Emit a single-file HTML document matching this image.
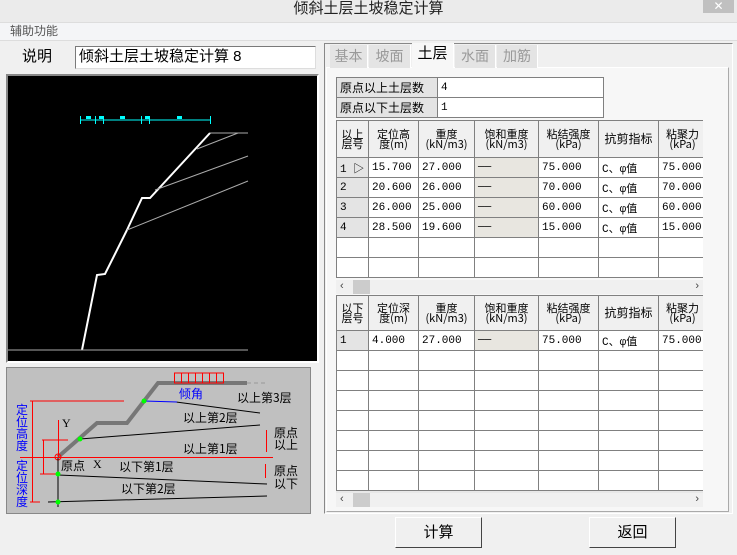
<!DOCTYPE html>
<html><head><meta charset="utf-8"><style>
*{margin:0;padding:0;box-sizing:border-box}
body{width:737px;height:555px;background:#f0f0f0;font-family:"Liberation Sans","Noto Sans CJK SC",sans-serif;font-size:13px;color:#000;position:relative;overflow:hidden}
.a{position:absolute}
table{border-collapse:collapse;table-layout:fixed;position:absolute;background:#fff}
td{border:1px solid #808080;height:20px;font-size:11px;padding:0 3px;white-space:nowrap;overflow:hidden;font-family:"Liberation Mono","Noto Sans CJK SC",monospace}
tr.h td{background:#f0f0f0;text-align:center;font-size:11px;line-height:10px;font-family:"Noto Sans CJK SC",sans-serif}
td.f{background:#e4e4e4}
td.g{background:#e8e6e0}
.sb{position:absolute;height:14px;background:#f0f0f0;font-size:11px;color:#444}
.btn{position:absolute;width:87px;height:31px;background:#f0f0f0;border:1px solid #fff;border-right-color:#444;border-bottom-color:#444;text-align:center;line-height:29px;font-size:15px}
.tab{position:absolute;top:45px;height:23px;font-size:14px;color:#999;text-align:center;line-height:22px;background:#e4e4e4;border-right:1px solid #fff}
</style></head><body>
<div class="a" style="left:0;top:0;width:737px;height:22px;background:#ebebeb"></div>
<div class="a" style="left:0;top:0;width:737px;text-align:center;font-size:15px;line-height:17px;color:#222">倾斜土层土坡稳定计算</div>
<div class="a" style="left:703px;top:0;width:31px;height:13px;background:#c0c0c0;color:#fff;text-align:center;font-size:12px;line-height:12px">✕</div>
<div class="a" style="left:0;top:22px;width:737px;height:19px;background:#f4f5f7;border-top:1px solid #ddd;border-bottom:1px solid #ddd"></div>
<div class="a" style="left:10px;top:23px;font-size:12px;color:#555;line-height:17px">辅助功能</div>
<div class="a" style="left:22px;top:47px;font-size:15px;line-height:20px">说明</div>
<div class="a" style="left:75px;top:46px;width:241px;height:23px;background:#fff;border:1px solid #7a7a7a;border-right-color:#ddd;border-bottom-color:#ddd;font-size:15px;line-height:20px;padding-left:3px">倾斜土层土坡稳定计算 8</div>
<div class="a" style="left:6px;top:74px;width:313px;height:289px;background:#000;border:2px solid #888;border-right-color:#fff;border-bottom-color:#fff"></div>
<svg class="a" style="left:0;top:0" width="330" height="555">
<line x1="80" y1="120" x2="210" y2="120" stroke="#0ff"/>
<g stroke="#0ff"><line x1="80.5" y1="116" x2="80.5" y2="124"/><line x1="95.5" y1="116" x2="95.5" y2="124"/><line x1="103.5" y1="116" x2="103.5" y2="124"/><line x1="141.5" y1="116" x2="141.5" y2="124"/><line x1="149.5" y1="116" x2="149.5" y2="124"/><line x1="210.5" y1="116" x2="210.5" y2="124"/></g>
<g fill="#0ff"><rect x="86" y="116" width="5" height="3"/><rect x="99" y="116" width="4" height="3"/><rect x="120" y="116" width="5" height="3"/><rect x="145" y="116" width="4" height="3"/><rect x="177" y="116" width="5" height="3"/></g>
<polyline points="82,350 97,275 105,274 127,230 142,198 150,198 210,133" fill="none" stroke="#fff" stroke-width="2"/>
<g stroke="#aaa" fill="none"><line x1="210" y1="133" x2="248" y2="133"/><line x1="127" y1="230" x2="248" y2="181"/><line x1="155" y1="190" x2="248" y2="156"/><line x1="197" y1="149" x2="238" y2="133"/><line x1="8" y1="350" x2="248" y2="350"/></g>
<rect x="6.5" y="367.5" width="304" height="146" fill="#c0c0c0" stroke="#888"/>
<polyline points="58,457 97,423 127,423 158,383 247,383" fill="none" stroke="#777" stroke-width="4"/>
<line x1="247" y1="383" x2="268" y2="383" stroke="#999" stroke-dasharray="4,3"/>
<g stroke="#f00" fill="none"><line x1="174" y1="383" x2="224" y2="383"/><line x1="174" y1="373" x2="224" y2="373"/>
<line x1="174.5" y1="373" x2="174.5" y2="383"/><line x1="181.5" y1="373" x2="181.5" y2="383"/><line x1="188.5" y1="373" x2="188.5" y2="383"/><line x1="195.5" y1="373" x2="195.5" y2="383"/><line x1="202.5" y1="373" x2="202.5" y2="383"/><line x1="209.5" y1="373" x2="209.5" y2="383"/><line x1="216.5" y1="373" x2="216.5" y2="383"/><line x1="223.5" y1="373" x2="223.5" y2="383"/>
<line x1="30" y1="401" x2="124" y2="401"/><line x1="32.5" y1="401" x2="32.5" y2="502"/><line x1="30" y1="502" x2="40" y2="502"/>
<line x1="42" y1="440" x2="68" y2="440"/><line x1="43.5" y1="440" x2="43.5" y2="474"/><line x1="40" y1="474" x2="58" y2="474"/>
<line x1="20" y1="457.5" x2="273" y2="457.5"/><line x1="58.5" y1="420" x2="58.5" y2="457"/>
<line x1="266.5" y1="430" x2="266.5" y2="452"/><line x1="265.5" y1="464" x2="265.5" y2="478"/>
<circle cx="58" cy="457" r="3"/></g>
<g stroke="#000" fill="none"><line x1="80" y1="439" x2="260" y2="425"/><line x1="176" y1="402" x2="260" y2="413"/><line x1="58" y1="458" x2="58" y2="507"/><line x1="58" y1="475" x2="267" y2="484"/><line x1="48" y1="502" x2="267" y2="496"/></g>
<line x1="144" y1="401" x2="177" y2="402" stroke="#00f"/>
<g fill="#0f0"><circle cx="80" cy="439" r="2.5"/><circle cx="144" cy="401" r="2.5"/><circle cx="58" cy="474" r="2.5"/><circle cx="58" cy="502" r="2.5"/></g>
<g font-family="Noto Sans CJK SC,sans-serif" font-size="12">
<text x="179" y="398" fill="#00f">倾角</text>
<text x="237" y="402">以上第3层</text><text x="183" y="422">以上第2层</text><text x="183" y="453">以上第1层</text>
<text x="119" y="471">以下第1层</text><text x="121" y="493">以下第2层</text>
<text x="61" y="470">原点</text><text x="93" y="468" font-family="Liberation Serif">X</text><text x="62" y="427" font-family="Liberation Serif">Y</text>
<text x="274" y="437">原点</text><text x="274" y="449">以上</text><text x="274" y="475">原点</text><text x="274" y="488">以下</text>
<g fill="#00f"><text x="16" y="414">定</text><text x="16" y="426">位</text><text x="16" y="438">高</text><text x="16" y="450">度</text><text x="16" y="470">定</text><text x="16" y="482">位</text><text x="16" y="494">深</text><text x="16" y="506">度</text></g>
</g>
</svg>
<div class="a" style="left:324px;top:43px;width:409px;height:471px;border:1px solid #888;border-right-color:#fff;border-bottom-color:#fff"></div>
<div class="a" style="left:326px;top:67px;width:403px;height:445px;background:#f7f7f7;border:1px solid #fff;border-right-color:#aaa;border-bottom-color:#aaa"></div>
<div class="tab" style="left:330px;width:38px">基本</div>
<div class="tab" style="left:369px;width:42px">坡面</div>
<div class="tab" style="left:412px;width:42px;top:43px;height:25px;background:#f7f7f7;color:#000;font-size:15px">土层</div>
<div class="tab" style="left:455px;width:41px">水面</div>
<div class="tab" style="left:497px;width:41px">加筋</div>
<table style="left:336px;top:77px;width:268px"><col style="width:101px"><col>
<tr><td class="f" style="font-size:12px;font-family:'Noto Sans CJK SC',sans-serif;height:19px">原点以上土层数</td><td>4</td></tr>
<tr><td class="f" style="font-size:12px;font-family:'Noto Sans CJK SC',sans-serif;height:19px">原点以下土层数</td><td>1</td></tr></table>
<div class="a" style="left:336px;top:120px;width:367px;height:158px;background:#e8e8e8;overflow:hidden">
<table style="left:0;top:0;width:370px"><col style="width:32px"><col style="width:50px"><col style="width:56px"><col style="width:64px"><col style="width:60px"><col style="width:60px"><col style="width:48px">
<tr class="h"><td style="height:37px">以上<br>层号</td><td>定位高<br>度(m)</td><td>重度<br>(kN/m3)</td><td>饱和重度<br>(kN/m3)</td><td>粘结强度<br>(kPa)</td><td style="font-size:12px">抗剪指标</td><td>粘聚力<br>(kPa)</td></tr>
<tr><td class="f">1 ▷</td><td>15.700</td><td>27.000</td><td class="g">──</td><td>75.000</td><td>C、φ值</td><td>75.000</td></tr>
<tr><td class="f">2</td><td>20.600</td><td>26.000</td><td class="g">──</td><td>70.000</td><td>C、φ值</td><td>70.000</td></tr>
<tr><td class="f">3</td><td>26.000</td><td>25.000</td><td class="g">──</td><td>60.000</td><td>C、φ值</td><td>60.000</td></tr>
<tr><td class="f">4</td><td>28.500</td><td>19.600</td><td class="g">──</td><td>15.000</td><td>C、φ值</td><td>15.000</td></tr>
<tr><td></td><td></td><td></td><td></td><td></td><td></td><td></td></tr>
<tr><td></td><td></td><td></td><td></td><td></td><td></td><td></td></tr>
</table></div>
<div class="sb" style="left:336px;top:280px;width:367px"><span style="position:absolute;left:4px">‹</span><span style="position:absolute;left:17px;width:17px;height:14px;background:#ccc"></span><span style="position:absolute;right:4px">›</span></div>
<div class="a" style="left:336px;top:295px;width:367px;height:198px;background:#e8e8e8;overflow:hidden">
<table style="left:0;top:0;width:370px"><col style="width:32px"><col style="width:50px"><col style="width:56px"><col style="width:64px"><col style="width:60px"><col style="width:60px"><col style="width:48px">
<tr class="h"><td style="height:35px">以下<br>层号</td><td>定位深<br>度(m)</td><td>重度<br>(kN/m3)</td><td>饱和重度<br>(kN/m3)</td><td>粘结强度<br>(kPa)</td><td style="font-size:12px">抗剪指标</td><td>粘聚力<br>(kPa)</td></tr>
<tr><td class="f">1</td><td>4.000</td><td>27.000</td><td class="g">──</td><td>75.000</td><td>C、φ值</td><td>75.000</td></tr>
<tr><td></td><td></td><td></td><td></td><td></td><td></td><td></td></tr>
<tr><td></td><td></td><td></td><td></td><td></td><td></td><td></td></tr>
<tr><td></td><td></td><td></td><td></td><td></td><td></td><td></td></tr>
<tr><td></td><td></td><td></td><td></td><td></td><td></td><td></td></tr>
<tr><td></td><td></td><td></td><td></td><td></td><td></td><td></td></tr>
<tr><td></td><td></td><td></td><td></td><td></td><td></td><td></td></tr>
<tr><td></td><td></td><td></td><td></td><td></td><td></td><td></td></tr>
</table></div>
<div class="sb" style="left:336px;top:493px;width:367px"><span style="position:absolute;left:4px">‹</span><span style="position:absolute;left:17px;width:17px;height:14px;background:#ccc"></span><span style="position:absolute;right:4px">›</span></div>
<div class="btn" style="left:395px;top:517px">计算</div>
<div class="btn" style="left:589px;top:517px">返回</div>
</body></html>
